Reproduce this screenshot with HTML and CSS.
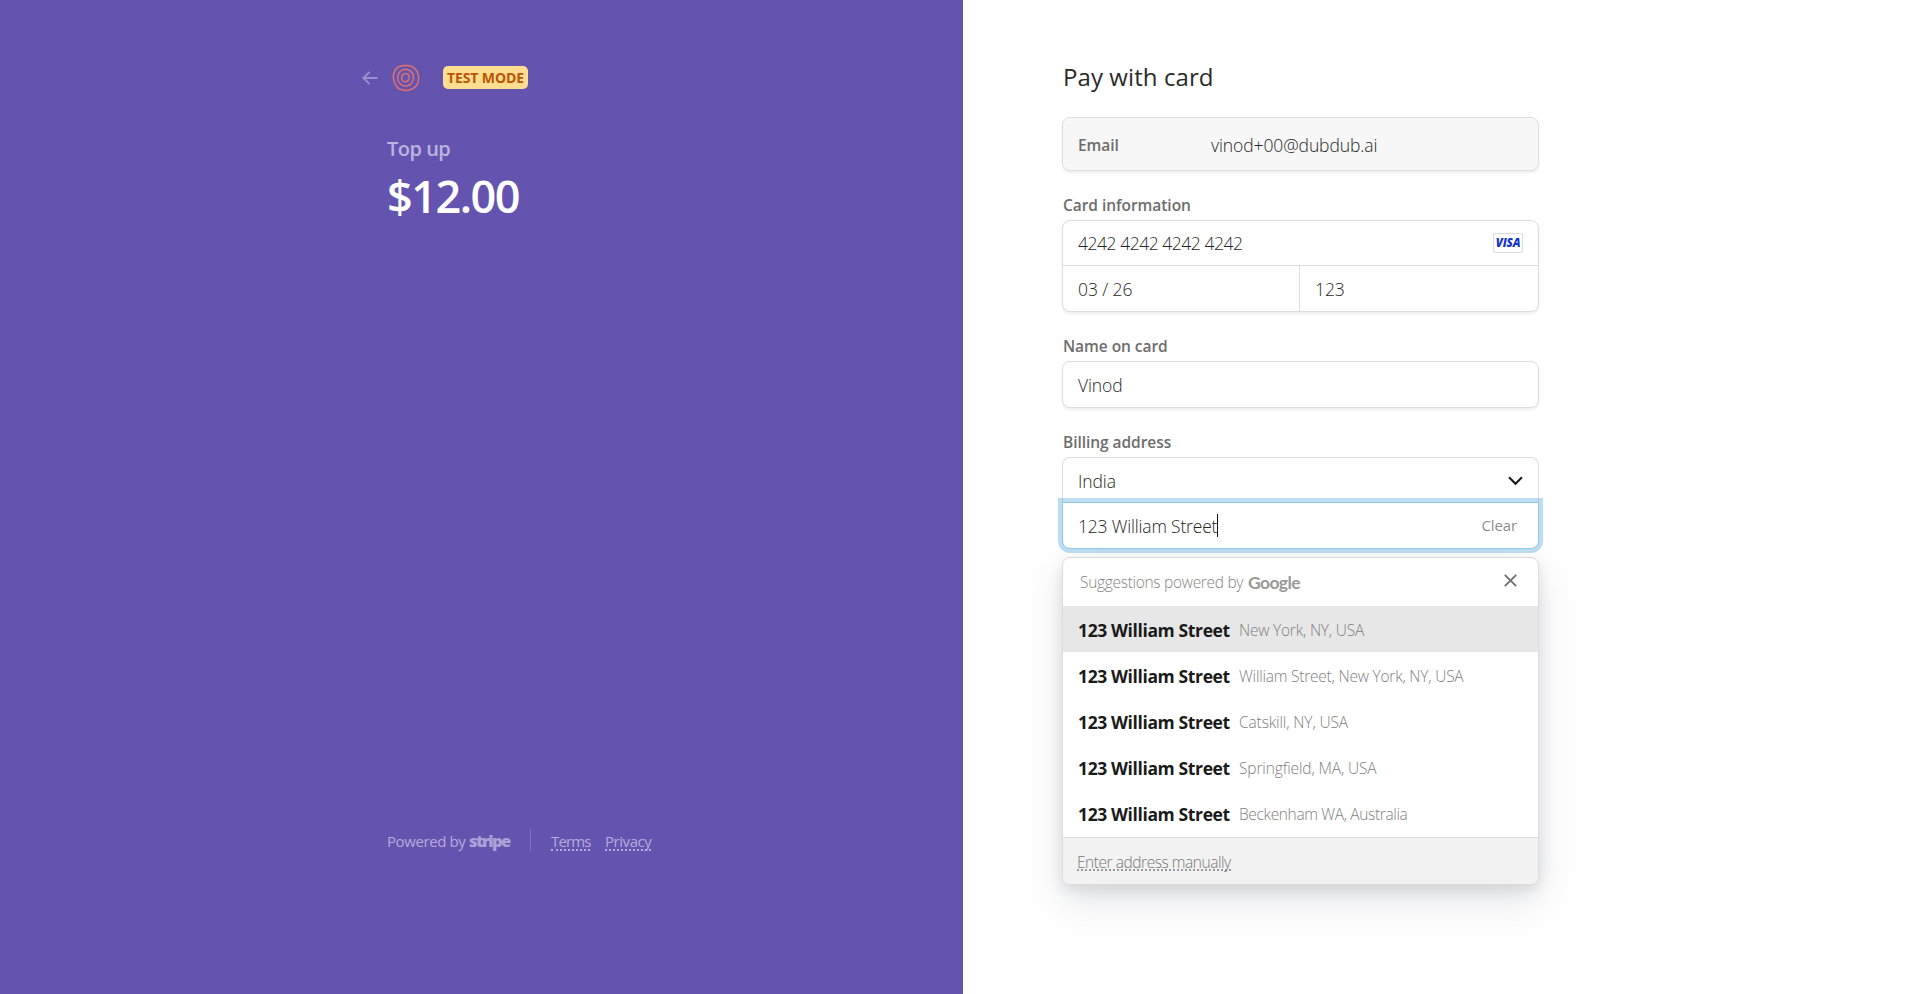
FILE: index.html
```
<!DOCTYPE html>
<html lang="en">
<head>
<meta charset="utf-8">
<title>Pay with card</title>
<link rel="stylesheet" href="styles.css">
</head>
<body>
<div class="checkout">
  <aside class="summary">
    <header class="brand">
      <svg class="back" width="16" height="14" viewBox="0 0 16 14" fill="none" stroke="currentColor" stroke-width="1.9"><path d="M15.600 7H1.200M7.600 .8 1.400 7l6.200 6.200"/></svg>
      <svg class="logo" width="28" height="28" viewBox="0 0 28 28" fill="none" stroke="currentColor" stroke-width="1.5">
        <path d="M6 3.100C9 1 12 1.500 15 1.400c5 .1 8.200 2.700 10.300 6.600 1.700 4 1.900 8 .2 12-2.200 3.700-6 5.900-10.500 6.400-4.800.2-9.500-1.600-11.300-5.500C1.700 17.500 1.200 15 1.300 12 1.700 8.500 3.300 5 6 3.100Z"/>
        <path d="M8.600 7c3-2.100 7-2.300 10 .1 2 2 3.300 5 2.700 8.100-.8 3.600-3.500 6.700-7.400 6.900-4 .1-7.300-2.900-8.100-6.800C5.500 12 6.400 9 8.600 7Z"/>
        <path d="M11 10.600c1.500-1.100 4-1.200 5.400.2 1.100 1.400 1.100 4.100-.1 5.600-1.500 1.500-4.200 1.700-5.600.3-1.400-1.600-1.300-4.600.3-6.100Z"/>
      </svg>
      <span class="badge">TEST MODE</span>
    </header>
    <div class="product">Top up</div>
    <div class="amount">$12.00</div>
    <footer class="legal">
      <span class="powered">Powered by</span><span class="stripe">stripe</span>
      <span class="rule"></span>
      <a class="link terms">Terms</a><a class="link privacy">Privacy</a>
    </footer>
  </aside>
  <main class="payment">
    <h1 class="title">Pay with card</h1>
    <div class="box email"><span class="label email-label">Email</span><span class="value email-value">vinod+00@dubdub.ai</span></div>

    <div class="label heading">Card information</div>
    <div class="box">
      <div class="row first">
        <span class="value number">4242 4242 4242 4242</span>
        <span class="visa"><span class="visa-name">VISA</span></span>
      </div>
      <div class="pair">
        <div class="row cell"><span class="value">03 / 26</span></div>
        <div class="row cell"><span class="value">123</span></div>
      </div>
    </div>

    <div class="label heading">Name on card</div>
    <div class="box"><div class="row"><span class="value">Vinod</span></div></div>

    <div class="label heading">Billing address</div>
    <div class="box country"><div class="row"><span class="value">India</span>
      <svg class="chevron" width="15" height="10" viewBox="0 0 15 10" fill="none" stroke="#1a1a1a" stroke-width="2.100"><path d="M1 1.200 7.500 7.700 14 1.200"/></svg></div></div>
    <div class="box focused"><div class="row"><span class="value street">123 William Street</span><span class="caret"></span><span class="clear">Clear</span></div></div>

    <section class="menu">
      <div class="menu-head">
        <span class="hint">Suggestions powered by</span><span class="google">Google</span>
        <svg class="close" width="13" height="13" viewBox="0 0 13 13" fill="none" stroke="#707070" stroke-width="1.900"><path d="m.8 .8 11.400 11.400M12.200 .8 .8 12.200"/></svg>
      </div>
      <div class="option active"><b class="main">123 William Street</b><span class="place">New York, NY, USA</span></div>
      <div class="option"><b class="main">123 William Street</b><span class="place">William Street, New York, NY, USA</span></div>
      <div class="option"><b class="main">123 William Street</b><span class="place tight">Catskill, NY, USA</span></div>
      <div class="option"><b class="main">123 William Street</b><span class="place tight">Springfield, MA, USA</span></div>
      <div class="option"><b class="main">123 William Street</b><span class="place wide">Beckenham WA, Australia</span></div>
      <div class="menu-foot"><a class="manual">Enter address manually</a></div>
    </section>
  </main>
</div>
</body>
</html>
```
FILE: styles.css
```
* { box-sizing: border-box; }
body { margin: 0; background: #fff; font-family: "Open Sans", "Noto Sans", sans-serif; color: #2a2a2a; }
.checkout { display: grid; grid-template-columns: 963px 1fr; height: 994px; overflow: hidden; white-space: nowrap; }

.summary { display: flex; flex-direction: column; padding: 66px 0 142px 387px; background: #6553b0; color: #fff; }
.brand { display: flex; align-items: center; height: 23px; margin-left: -25px; }
.back { color: #9c91cc; }
.logo { margin-left: 14px; color: #e0716f; }
.badge { margin-left: 23px; width: 85px; height: 23px; line-height: 23px; text-align: center; border-radius: 5px; background: #ffde92; color: #bb5504; font-size: 14px; font-weight: 700; letter-spacing: -.11px; }
.product { margin-top: 46px; font-size: 20px; line-height: 28px; font-weight: 600; letter-spacing: -.5px; color: #bdb3df; }
.amount { margin-top: 5px; font-size: 45px; line-height: 56px; font-weight: 600; letter-spacing: -1.500px; }
.legal { display: flex; align-items: center; height: 24px; margin-top: auto; font-size: 15px; line-height: 24px; color: #b5abdb; }
.powered { width: 82px; padding-top: 1px; letter-spacing: -.4px; }
.stripe { width: 42px; padding-top: 1px; font-size: 16.500px; font-weight: 800; letter-spacing: -1.550px; color: #aca1d6; }
.rule { width: 1px; height: 22px; margin: 0 20px 0 19px; background: #8274c0; }
.link { height: 21px; line-height: 23px; border-bottom: 2px dotted #b5abdb; }
.terms { width: 39px; letter-spacing: -.85px; }
.privacy { width: 46px; margin-left: 15px; letter-spacing: -.45px; }

.payment { width: 577px; padding: 61px 0 0 100px; }
.title { margin: 0 0 24px; font-size: 24px; line-height: 31px; padding-bottom: 1px; font-weight: 530; letter-spacing: .08px; }
.label { font-size: 15.500px; font-weight: 580; line-height: 24px; letter-spacing: -.05px; color: #6d6d6d; }
.heading { margin: 22px 0 3px; }
.value { font-size: 17.500px; font-weight: 360; letter-spacing: -.1px; color: #262626; }
.box { width: 477px; margin-left: -1px; border: 1px solid #dedede; border-radius: 8px; background: #fff; box-shadow: 0 2px 3px rgba(0,0,0,.07); }
.email { display: flex; align-items: center; height: 54px; padding: 1px 0 0 15px; background: #f7f7f7; }
.email-label { width: 133px; }
.row { display: flex; align-items: center; height: 45px; padding: 0 15px; }
.first { height: 44px; }
.number { letter-spacing: -.47px; }
.visa { display: grid; place-items: center; width: 30px; height: 20px; margin-left: auto; border: 1px solid #dcdcdc; border-radius: 2px; }
.visa-name { font-size: 11.500px; line-height: 18px; font-weight: 800; font-style: italic; letter-spacing: -.2px; color: #1434cb; }
.pair { display: grid; grid-template-columns: 236px 1fr; border-top: 1px solid #dedede; }
.cell + .cell { border-left: 1px solid #dedede; padding-left: 15px; }
.country { height: 45px; border-bottom: 0; border-radius: 8px 8px 0 0; box-shadow: none; }
.chevron { margin-left: auto; }
.focused { position: relative; border-color: #8fc7e6; border-radius: 0 0 8px 8px; box-shadow: 0 0 0 4px rgba(58,151,212,.33); }
.street { letter-spacing: -.18px; }
.caret { width: 1px; height: 23px; background: #111; }
.clear { margin: 0 6px 0 auto; padding-bottom: 1px; font-size: 15px; letter-spacing: -.13px; color: #8d8d8d; }

.menu { width: 477px; margin: 8px 0 0 -1px; border: 1px solid #dcdcdc; border-radius: 8px; overflow: hidden; background: #fff; box-shadow: 0 16px 40px rgba(60,66,87,.14), 0 5px 14px rgba(0,0,0,.1); }
.menu-head { display: flex; align-items: center; height: 48px; padding: 0 21px 0 17px; color: #858585; }
.hint { width: 168px; font-size: 15.500px; font-weight: 320; letter-spacing: -.3px; }
.google { font-family: Lato, sans-serif; font-size: 17.500px; font-weight: 700; letter-spacing: -.6px; color: #999; }
.close { margin: 0 0 4px auto; }
.option { display: flex; align-items: center; height: 46.200px; padding: 1px 15px 0; }
.active { background: #e7e7e7; }
.main { width: 161px; font-size: 17.500px; font-weight: 680; letter-spacing: -.38px; color: #1a1a1a; }
.place { font-size: 15.500px; font-weight: 320; letter-spacing: -.22px; color: #808080; }
.tight { letter-spacing: -.13px; }
.wide { letter-spacing: -.36px; }
.menu-foot { display: flex; align-items: center; height: 47px; padding-left: 14px; border-top: 1px solid #dcdcdc; background: #f2f2f2; }
.manual { height: 20px; line-height: 22px; border-bottom: 2px dotted #999; font-size: 15.500px; font-weight: 320; letter-spacing: -.45px; color: #777; }
```
